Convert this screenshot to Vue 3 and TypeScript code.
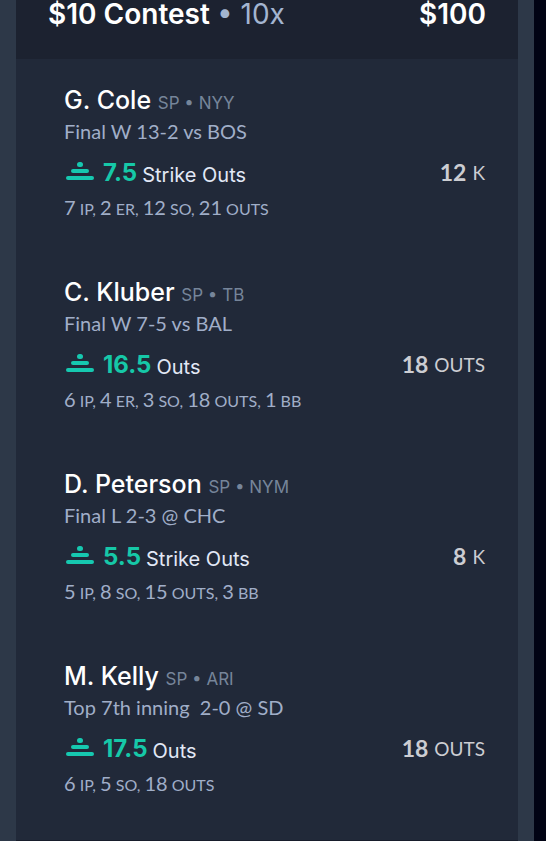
<script setup lang="ts">
interface Stat {
  value: string
  unit: string
}

interface Pick {
  name: string
  position: string
  team: string
  status: string
  line: string
  market: string
  stats: Stat[]
  result: Stat
}

const toStats = (text: string): Stat[] =>
  text.split(', ').map((part) => {
    const [value, unit] = part.split(' ')
    return { value, unit }
  })

const picks: Pick[] = [
  {
    name: 'G. Cole',
    position: 'SP',
    team: 'NYY',
    status: 'Final W 13-2 vs BOS',
    line: '7.5',
    market: 'Strike Outs',
    stats: toStats('7 IP, 2 ER, 12 SO, 21 OUTS'),
    result: { value: '12', unit: 'K' },
  },
  {
    name: 'C. Kluber',
    position: 'SP',
    team: 'TB',
    status: 'Final W 7-5 vs BAL',
    line: '16.5',
    market: 'Outs',
    stats: toStats('6 IP, 4 ER, 3 SO, 18 OUTS, 1 BB'),
    result: { value: '18', unit: 'OUTS' },
  },
  {
    name: 'D. Peterson',
    position: 'SP',
    team: 'NYM',
    status: 'Final L 2-3 @ CHC',
    line: '5.5',
    market: 'Strike Outs',
    stats: toStats('5 IP, 8 SO, 15 OUTS, 3 BB'),
    result: { value: '8', unit: 'K' },
  },
  {
    name: 'M. Kelly',
    position: 'SP',
    team: 'ARI',
    status: 'Top 7th inning  2-0 @ SD',
    line: '17.5',
    market: 'Outs',
    stats: toStats('6 IP, 5 SO, 18 OUTS'),
    result: { value: '18', unit: 'OUTS' },
  },
]
</script>

<template>
  <main class="frame">
    <section class="card">
      <header class="head">
        <h1 class="title">$10 Contest <span class="multiplier">• 10x</span></h1>
        <span class="payout">$100</span>
      </header>
      <ul class="picks">
        <li v-for="pick in picks" :key="pick.name" class="pick">
          <h2 class="name">
            {{ pick.name }}
            <span class="team">{{ pick.position }} • {{ pick.team }}</span>
          </h2>
          <p class="status">{{ pick.status }}</p>
          <div class="market">
            <svg class="over" viewBox="0 0 28 20" aria-hidden="true">
              <rect x="11" y="0" width="6" height="5" rx="2.5" />
              <rect x="5" y="7" width="18" height="4" rx="2" />
              <rect x="0" y="14" width="28" height="4" rx="2" />
            </svg>
            <strong class="line">{{ pick.line }}</strong>
            <span class="label">{{ pick.market }}</span>
            <span class="result">
              <strong class="value">{{ pick.result.value }}</strong>
              <span>{{ pick.result.unit }}</span>
            </span>
          </div>
          <p class="stats">
            <template v-for="(stat, i) in pick.stats" :key="stat.unit">{{ stat.value }}<span class="unit">{{ ` ${stat.unit}${i < pick.stats.length - 1 ? ', ' : ''}` }}</span></template>
          </p>
        </li>
      </ul>
    </section>
  </main>
</template>

<style>
body {
  margin: 0;
  background: #010314;
}
</style>

<style scoped>
.frame {
  margin-right: 12px;
  padding: 0 16px;
  background: #2d3848;
  font-family: Inter, "Liberation Sans", sans-serif;
}

.card {
  background: #212939;
  border-bottom: 1px solid #171d2b;
}

.head {
  display: flex;
  justify-content: space-between;
  padding: 0 32px 31px;
  background: #1c2230;
  color: #fff;
  font-size: 28px;
  font-weight: 600;
  line-height: 28px;
}

.title {
  margin: 0;
  font: inherit;
}

.multiplier {
  color: #a3b5d0;
  font-weight: 400;
}

.picks {
  display: flex;
  flex-direction: column;
  gap: 54px;
  margin: 0;
  padding: 24px 33px 43px 48px;
  list-style: none;
}

.name {
  margin: 0;
  color: #fff;
  font-size: 25px;
  font-weight: 500;
  line-height: 34px;
}

.team {
  color: #76859a;
  font-size: 17px;
  font-weight: 400;
  line-height: 1;
}

.status,
.stats {
  margin: 0;
  color: #a0aec8;
  font-family: Lato, sans-serif;
  font-size: 20px;
  line-height: 28px;
  white-space: pre-wrap;
}

.market {
  display: flex;
  align-items: center;
  height: 38px;
  margin: 8px 0 2px;
}

.over {
  width: 28px;
  height: 20px;
  margin: 0 9px 0 2px;
  fill: #16c8b0;
}

.line {
  color: #16c8a8;
  font-size: 24px;
  font-weight: 700;
}

.label {
  margin-left: 5px;
  padding-top: 6px;
  color: #e2e8f6;
  font-size: 20px;
}

.result {
  display: flex;
  align-items: center;
  gap: 6px;
  margin-left: auto;
  color: #cccdd2;
  font-family: Lato, sans-serif;
  font-size: 19px;
}

.value {
  font-size: 23px;
  font-weight: 700;
}

.unit {
  font-size: 16px;
  line-height: 1;
}
</style>
